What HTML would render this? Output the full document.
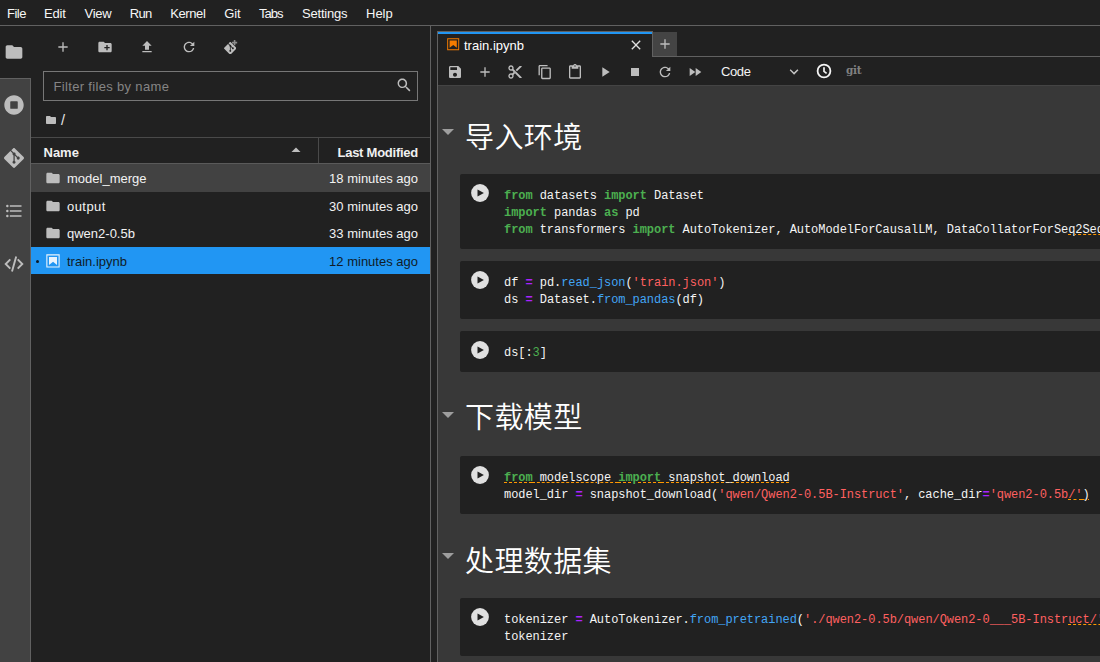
<!DOCTYPE html>
<html lang="zh">
<head>
<meta charset="utf-8">
<title>JupyterLab</title>
<style>
html,body{margin:0;padding:0;}
body{width:1100px;height:662px;overflow:hidden;background:#212121;position:relative;
 font-family:"Liberation Sans","Noto Sans CJK SC",sans-serif;font-size:13px;color:#f2f2f2;}
.a{position:absolute;}
.t{position:absolute;white-space:nowrap;line-height:16px;height:16px;}
svg{position:absolute;display:block;}
.ic{fill:#bdbdbd;}
/* menu */
#menubar{left:0;top:0;width:1100px;height:25px;background:#212121;border-bottom:1px solid #616161;}
#menubar .t{top:5.500px;color:#f6f6f6;}
/* sidebar */
#sidebar{left:0;top:26px;width:30px;height:636px;background:#424242;border-right:1px solid #616161;}
#sbactive{left:0;top:26px;width:31px;height:52px;background:#212121;}
#sbtopline{left:0;top:78px;width:31px;height:1px;background:#616161;}
/* file browser */
#fb{left:31px;top:26px;width:399px;height:636px;background:#212121;}
#fbright{left:430px;top:26px;width:1px;height:636px;background:#616161;}
#filter{left:43px;top:71px;width:372.500px;height:27.500px;border:1px solid #777;box-sizing:content-box;}
.hline{position:absolute;height:1px;background:#4a4a4a;}
.row{position:absolute;left:31px;width:399px;}
.mono{font-family:"Liberation Mono","DejaVu Sans Mono",monospace;font-size:12px;letter-spacing:-0.06px;}
/* main */
#tab{left:437px;top:31px;width:216px;height:26px;background:#212121;border-left:1px solid #616161;border-right:1px solid #616161;border-top:1px solid #616161;box-sizing:border-box;}
#tabblue{left:438px;top:32px;width:214px;height:2px;background:#2196f3;}
#tabline{left:652px;top:56px;width:448px;height:1px;background:#616161;}
#plusbtn{left:653px;top:32px;width:24px;height:24px;background:#444;}
#mainleft{left:437px;top:57px;width:1px;height:605px;background:#616161;}
#toolbar{left:438px;top:57px;width:662px;height:28px;background:#212121;border-bottom:1px solid #444;}
#nb{left:438px;top:86px;width:662px;height:576px;background:#383838;}
.cell{position:absolute;left:460px;width:640px;background:#212121;border-radius:2px 0 0 2px;}
.h1{position:absolute;left:465px;white-space:nowrap;font-size:29px;letter-spacing:0.4px;line-height:40px;height:40px;color:#fff;font-weight:300;
 font-family:"Liberation Sans","Noto Sans CJK SC DemiLight","Noto Sans CJK SC",sans-serif;}
.code{position:absolute;left:504px;margin-top:1px;white-space:pre;line-height:17px;color:#f4f4f4;}
.k{color:#4caf50;font-weight:bold;}
.o{color:#aa22ff;font-weight:bold;}
.p{color:#42a5f5;}
.s{color:#ff6060;}
.n{color:#4caf50;}
.u{text-decoration:underline dashed #ff9800 1px;text-underline-offset:1px;}
</style>
</head>
<body>

<!-- ===== menu bar ===== -->
<div id="menubar" class="a">
 <span class="t" style="left:7px;letter-spacing:-0.500px">File</span>
 <span class="t" style="left:44px;letter-spacing:-0.200px">Edit</span>
 <span class="t" style="left:84.4px;letter-spacing:-0.2px">View</span>
 <span class="t" style="left:129.700px;letter-spacing:-0.700px">Run</span>
 <span class="t" style="left:170.2px;letter-spacing:-0.4px">Kernel</span>
 <span class="t" style="left:224.200px;letter-spacing:-0.050px">Git</span>
 <span class="t" style="left:258.900px;letter-spacing:-0.950px">Tabs</span>
 <span class="t" style="left:302px;letter-spacing:-0.2px">Settings</span>
 <span class="t" style="left:366px">Help</span>
</div>

<!-- ===== left sidebar ===== -->
<div id="sidebar" class="a"></div>
<div id="sbactive" class="a"></div>
<div id="sbtopline" class="a"></div>

<!-- ===== file browser ===== -->
<div id="fb" class="a"></div>
<div id="fbright" class="a"></div>
<div id="filter" class="a"></div>
<span class="t" style="left:53.5px;top:78.700px;color:#858585;letter-spacing:0.33px">Filter files by name</span>
<span class="t" style="left:61px;top:112.200px;color:#e8e8e8;font-size:14.500px">/</span>
<div class="hline" style="left:31px;top:137px;width:399px;"></div>
<div class="hline" style="left:31px;top:163px;width:399px;background:#5a5a5a"></div>
<div class="a" style="left:318px;top:138px;width:1px;height:25px;background:#4a4a4a;"></div>
<span class="t" style="left:43.5px;top:144.5px;font-weight:bold;color:#f0f0f0;">Name</span>
<span class="t" style="right:682px;top:144.500px;font-weight:bold;color:#f0f0f0;letter-spacing:-0.250px">Last Modified</span>

<div class="row" style="top:164px;height:27.600px;background:#424242;"></div>
<div class="row" style="top:246.700px;height:27.300px;background:#2196f3;"></div>
<span class="t" style="left:67px;top:170.5px;">model_merge</span>
<span class="t" style="left:67px;top:198.5px;letter-spacing:0.45px">output</span>
<span class="t" style="left:67px;top:225.5px;">qwen2-0.5b</span>
<span class="t" style="left:67px;top:253.500px;color:#101c28;">train.ipynb</span>
<span class="t" style="right:682px;top:170.5px;">18 minutes ago</span>
<span class="t" style="right:682px;top:198.5px;">30 minutes ago</span>
<span class="t" style="right:682px;top:225.5px;">33 minutes ago</span>
<span class="t" style="right:682px;top:253.500px;color:#101c28;">12 minutes ago</span>
<div class="a" style="left:35.500px;top:259.700px;width:3.400px;height:3.400px;border-radius:2px;background:#0d1b2a;"></div>

<!-- ===== main area ===== -->
<div id="tab" class="a"></div>
<div id="tabblue" class="a"></div>
<div id="tabline" class="a"></div>
<div id="plusbtn" class="a"></div>
<div id="toolbar" class="a"></div>
<div id="mainleft" class="a"></div>
<span class="t" style="left:464px;top:37.700px;color:#fff;">train.ipynb</span>
<span class="t" style="left:721px;top:63.500px;color:#f4f4f4;letter-spacing:-0.400px">Code</span>
<span class="t" style="left:846px;top:61.500px;color:#808080;font-family:'DejaVu Serif',serif;font-weight:bold;font-size:10.500px;letter-spacing:-0.300px">git</span>

<div id="nb" class="a"></div>

<!-- headings -->
<div class="h1" style="top:117.500px;">导入环境</div>
<div class="h1" style="top:398.200px;">下载模型</div>
<div class="h1" style="top:542px;">处理数据集</div>

<!-- cells -->
<div class="cell" style="top:174px;height:74.5px;"></div>
<div class="cell" style="top:261px;height:58px;"></div>
<div class="cell" style="top:331px;height:40.5px;"></div>
<div class="cell" style="top:456px;height:57.700px;"></div>
<div class="cell" style="top:598px;height:57.5px;"></div>

<div class="code mono" style="top:186.5px;"><span class="k">from</span> datasets <span class="k">import</span> Dataset
<span class="k">import</span> pandas <span class="k">as</span> pd
<span class="k">from</span> transformers <span class="k">import</span> AutoTokenizer, AutoModelForCausalLM, DataCollatorForSe<span class="u">q2Seq, TrainingArguments, Trainer</span></div>

<div class="code mono" style="top:273.5px;">df <span class="o">=</span> pd.<span class="p">read_json</span>(<span class="s">'train.json'</span>)
ds <span class="o">=</span> Dataset.<span class="p">from_pandas</span>(df)</div>

<div class="code mono" style="top:343.5px;">ds[:<span class="n">3</span>]</div>

<div class="code mono" style="top:469px;"><span class="u"><span class="k">from</span> modelscope <span class="k">import</span> snapshot_download</span>
model_dir <span class="o">=</span> snapshot_download(<span class="s">'qwen/Qwen2-0.5B-Instruct'</span>, cache_dir<span class="o">=</span><span class="s">'qwen2-0.5b<span class="u">/'</span></span><span class="u">)</span></div>

<div class="code mono" style="top:610.5px;">tokenizer <span class="o">=</span> AutoTokenizer.<span class="p">from_pretrained</span>(<span class="s">'./qwen2-0.5b/qwen/Qwen2-0___5B-Instr<span class="u">uct/', use_fast=False</span></span>)
tokenizer</div>

<!-- ===== icons ===== -->
<!-- sidebar -->
<svg class="ic" style="left:4px;top:42px" width="20" height="20" viewBox="0 0 24 24"><path d="M10 4H4c-1.1 0-1.99.9-1.99 2L2 18c0 1.1.9 2 2 2h16c1.1 0 2-.9 2-2V8c0-1.100-.9-2-2-2h-8l-2-2z"/></svg>
<svg class="ic" style="left:4px;top:95px" width="20" height="20" viewBox="0 0 512 512"><path d="M256 8C119 8 8 119 8 256s111 248 248 248 248-111 248-248S393 8 256 8zm96 328c0 8.800-7.200 16-16 16H176c-8.800 0-16-7.200-16-16V176c0-8.800 7.200-16 16-16h160c8.800 0 16 7.200 16 16v160z"/></svg>
<svg class="ic" style="left:4px;top:148px" width="20" height="20" viewBox="0 0 24 24"><path d="M23.546 10.930L13.067.452c-.604-.603-1.582-.603-2.188 0L8.708 2.627l2.760 2.760c.645-.215 1.379-.070 1.889.441.516.515.658 1.258.438 1.900l2.658 2.660c.645-.223 1.387-.078 1.900.435.721.720.721 1.884 0 2.604-.719.719-1.881.719-2.600 0-.539-.541-.674-1.337-.404-1.996L12.860 8.955v6.525c.176.086.342.203.488.348.713.721.713 1.883 0 2.600-.719.721-1.889.721-2.609 0-.719-.719-.719-1.879 0-2.598.182-.180.387-.316.605-.406V8.835c-.217-.091-.424-.222-.600-.401-.545-.545-.676-1.342-.396-2.009L7.636 3.700.450 10.881c-.6.605-.6 1.584 0 2.189l10.480 10.477c.604.604 1.582.604 2.186 0l10.430-10.430c.605-.603.605-1.582 0-2.187"/></svg>
<svg class="ic" style="left:4px;top:201px" width="20" height="20" viewBox="0 0 24 24"><path d="M7,5H21V7H7V5M7,13V11H21V13H7M4,4.500A1.500,1.500 0 0,1 5.500,6A1.500,1.500 0 0,1 4,7.500A1.500,1.500 0 0,1 2.500,6A1.500,1.500 0 0,1 4,4.500M4,10.500A1.500,1.500 0 0,1 5.500,12A1.500,1.500 0 0,1 4,13.500A1.500,1.500 0 0,1 2.500,12A1.500,1.500 0 0,1 4,10.500M7,19V17H21V19H7M4,16.500A1.500,1.500 0 0,1 5.500,18A1.500,1.500 0 0,1 4,19.500A1.500,1.500 0 0,1 2.500,18A1.500,1.500 0 0,1 4,16.500Z"/></svg>
<svg style="left:4px;top:254.300px;fill:none;stroke:#bdbdbd;stroke-width:1.900" width="20" height="20" viewBox="0 0 20 20"><path d="M6.300 5.300L1.700 10l4.600 4.700M13.700 5.300L18.300 10l-4.600 4.700M12.200 2.400L8 17.600"/></svg>

<!-- file browser toolbar -->
<svg class="ic" style="left:55px;top:39px" width="16" height="16" viewBox="0 0 24 24"><path d="M19 13h-6v6h-2v-6H5v-2h6V5h2v6h6v2z"/></svg>
<svg class="ic" style="left:97px;top:39px" width="16" height="16" viewBox="0 0 24 24"><path d="M20 6h-8l-2-2H4c-1.110 0-1.990.890-1.990 2L2 18c0 1.110.890 2 2 2h16c1.110 0 2-.890 2-2V8c0-1.110-.890-2-2-2zm-1 8h-3v3h-2v-3h-3v-2h3V9h2v3h3v2z"/></svg>
<svg class="ic" style="left:139px;top:39px" width="16" height="16" viewBox="0 0 24 24"><path d="M9 16h6v-6h4l-7-7-7 7h4zm-4 2h14v2H5z"/></svg>
<svg class="ic" style="left:181px;top:39px" width="16" height="16" viewBox="0 0 18 18"><path d="M9 13.500c-2.490 0-4.500-2.010-4.500-4.500S6.510 4.500 9 4.500c1.240 0 2.360.520 3.170 1.330L10 8h5V3l-1.760 1.760C12.150 3.680 10.660 3 9 3 5.690 3 3.010 5.690 3.010 9S5.690 15 9 15c2.970 0 5.430-2.160 5.900-5h-1.520c-.46 2-2.240 3.500-4.380 3.500z"/></svg>
<svg class="ic" style="left:223.550px;top:41.850px" width="12.500" height="12.500" viewBox="0 0 24 24"><path d="M23.546 10.930L13.067.452c-.604-.603-1.582-.603-2.188 0L8.708 2.627l2.760 2.760c.645-.215 1.379-.070 1.889.441.516.515.658 1.258.438 1.900l2.658 2.660c.645-.223 1.387-.078 1.900.435.721.720.721 1.884 0 2.604-.719.719-1.881.719-2.600 0-.539-.541-.674-1.337-.404-1.996L12.860 8.955v6.525c.176.086.342.203.488.348.713.721.713 1.883 0 2.600-.719.721-1.889.721-2.609 0-.719-.719-.719-1.879 0-2.598.182-.180.387-.316.605-.406V8.835c-.217-.091-.424-.222-.600-.401-.545-.545-.676-1.342-.396-2.009L7.636 3.700.450 10.881c-.6.605-.6 1.584 0 2.189l10.480 10.477c.604.604 1.582.604 2.186 0l10.430-10.430c.605-.603.605-1.582 0-2.187"/></svg>
<svg style="left:232.400px;top:40.400px;fill:#8c8c8c" width="5.200" height="5.200" viewBox="0 0 5.200 5.200"><path d="M1.800 0h1.600v1.800h1.800v1.600H3.400v1.800H1.800V3.400H0V1.800h1.800z"/></svg>

<!-- search -->
<svg class="ic" style="left:396.200px;top:77px" width="16" height="16" viewBox="0 0 18 18"><path d="M12.100 10.900h-.7l-.2-.2c.8-.9 1.300-2.200 1.300-3.500 0-3-2.400-5.400-5.400-5.400S1.800 4.200 1.800 7.100s2.400 5.400 5.400 5.400c1.300 0 2.500-.5 3.500-1.300l.2.200v.7l4.100 4.100 1.200-1.200-4.100-4.100zm-5 0c-2.100 0-3.700-1.700-3.700-3.700s1.700-3.700 3.700-3.700 3.700 1.700 3.700 3.700-1.600 3.700-3.700 3.700z"/></svg>
<!-- breadcrumb folder -->
<svg class="ic" style="left:45px;top:114px" width="12" height="12" viewBox="0 0 24 24"><path d="M10 4H4c-1.100 0-1.990.9-1.990 2L2 18c0 1.100.9 2 2 2h16c1.100 0 2-.9 2-2V8c0-1.100-.9-2-2-2h-8l-2-2z"/></svg>
<!-- sort caret -->
<svg class="ic" style="left:290px;top:146px" width="12" height="7" viewBox="0 0 12 7"><path d="M1.500 6L6 1.500l4.500 4.500z"/></svg>
<!-- row icons -->
<svg class="ic" style="left:45px;top:170px" width="16" height="16" viewBox="0 0 24 24"><path d="M10 4H4c-1.100 0-1.990.9-1.990 2L2 18c0 1.100.9 2 2 2h16c1.100 0 2-.9 2-2V8c0-1.100-.9-2-2-2h-8l-2-2z"/></svg>
<svg class="ic" style="left:45px;top:198px" width="16" height="16" viewBox="0 0 24 24"><path d="M10 4H4c-1.100 0-1.990.9-1.990 2L2 18c0 1.100.9 2 2 2h16c1.100 0 2-.9 2-2V8c0-1.100-.9-2-2-2h-8l-2-2z"/></svg>
<svg class="ic" style="left:45px;top:225px" width="16" height="16" viewBox="0 0 24 24"><path d="M10 4H4c-1.100 0-1.990.9-1.990 2L2 18c0 1.100.9 2 2 2h16c1.100 0 2-.9 2-2V8c0-1.100-.9-2-2-2h-8l-2-2z"/></svg>
<svg style="left:45px;top:253px;fill:#e8f3fd" width="16" height="16" viewBox="0 0 22 22"><path d="M18.700 3.300v15.400H3.300V3.300h15.400m1.500-1.500H1.800v18.300h18.300l.1-18.300z"/><path d="M16.500 16.500l-5.400-4.300-5.600 4.300v-11h11z"/></svg>

<!-- tab icons -->
<svg style="left:445.800px;top:36.800px;fill:#f57c00" width="14.400" height="14.400" viewBox="0 0 22 22"><path d="M18.700 3.300v15.400H3.300V3.300h15.400m1.500-1.500H1.800v18.300h18.300l.1-18.300z"/><path d="M16.500 16.500l-5.400-4.300-5.600 4.300v-11h11z"/></svg>
<svg style="left:628px;top:37px;fill:#e0e0e0" width="16" height="16" viewBox="0 0 24 24"><path d="M19 6.410L17.590 5 12 10.590 6.410 5 5 6.410 10.590 12 5 17.590 6.410 19 12 13.410 17.590 19 19 17.590 13.410 12z"/></svg>
<svg class="ic" style="left:657px;top:36px" width="16" height="16" viewBox="0 0 24 24"><path d="M19 13h-6v6h-2v-6H5v-2h6V5h2v6h6v2z"/></svg>

<!-- notebook toolbar -->
<svg class="ic" style="left:447px;top:64px" width="16" height="16" viewBox="0 0 24 24"><path d="M17 3H5c-1.110 0-2 .9-2 2v14c0 1.100.890 2 2 2h14c1.100 0 2-.9 2-2V7l-4-4zm-5 16c-1.660 0-3-1.340-3-3s1.340-3 3-3 3 1.340 3 3-1.340 3-3 3zm3-10H5V5h10v4z"/></svg>
<svg class="ic" style="left:477px;top:64px" width="16" height="16" viewBox="0 0 24 24"><path d="M19 13h-6v6h-2v-6H5v-2h6V5h2v6h6v2z"/></svg>
<svg class="ic" style="left:507px;top:64px" width="16" height="16" viewBox="0 0 24 24"><path d="M9.640 7.640c.23-.5.360-1.050.360-1.640 0-2.210-1.790-4-4-4S2 3.790 2 6s1.790 4 4 4c.590 0 1.140-.130 1.640-.360L10 12l-2.360 2.360C7.140 14.130 6.590 14 6 14c-2.210 0-4 1.790-4 4s1.790 4 4 4 4-1.790 4-4c0-.590-.130-1.140-.360-1.640L12 14l7 7h3v-1L9.640 7.640zM6 8c-1.100 0-2-.890-2-2s.9-2 2-2 2 .890 2 2-.9 2-2 2zm0 12c-1.100 0-2-.890-2-2s.9-2 2-2 2 .890 2 2-.9 2-2 2zm6-7.500c-.280 0-.5-.220-.5-.5s.220-.5.500-.5.500.220.500.5-.220.500-.5.500zM19 3l-6 6 2 2 7-7V3z"/></svg>
<svg class="ic" style="left:537px;top:64px" width="16" height="16" viewBox="0 0 18 18"><path d="M11.900 1H3.200c-.8 0-1.500.7-1.500 1.500v10.200h1.500V2.500h8.700V1zm2.200 2.900h-8c-.8 0-1.500.7-1.500 1.500v10.200c0 .8.700 1.500 1.500 1.500h8c.8 0 1.500-.7 1.500-1.500V5.400c0-.8-.7-1.500-1.500-1.500zm0 11.600h-8V5.400h8v10.100z"/></svg>
<svg class="ic" style="left:567px;top:64px" width="16" height="16" viewBox="0 0 24 24"><path d="M19 2h-4.180C14.400.840 13.300 0 12 0c-1.300 0-2.400.840-2.820 2H5c-1.100 0-2 .9-2 2v16c0 1.100.9 2 2 2h14c1.100 0 2-.9 2-2V4c0-1.100-.9-2-2-2zm-7 0c.550 0 1 .450 1 1s-.450 1-1 1-1-.450-1-1 .450-1 1-1zm7 18H5V4h2v3h10V4h2v16z"/></svg>
<svg class="ic" style="left:597px;top:64px" width="16" height="16" viewBox="0 0 24 24"><path d="M8 5v14l11-7z"/></svg>
<svg class="ic" style="left:627px;top:64px" width="16" height="16" viewBox="0 0 24 24"><path d="M6 6h12v12H6z"/></svg>
<svg class="ic" style="left:657px;top:64px" width="16" height="16" viewBox="0 0 18 18"><path d="M9 13.500c-2.490 0-4.500-2.010-4.500-4.500S6.510 4.500 9 4.500c1.240 0 2.360.520 3.170 1.330L10 8h5V3l-1.760 1.760C12.150 3.680 10.660 3 9 3 5.690 3 3.010 5.690 3.010 9S5.690 15 9 15c2.970 0 5.430-2.160 5.900-5h-1.520c-.46 2-2.240 3.500-4.380 3.500z"/></svg>
<svg class="ic" style="left:687px;top:64px" width="16" height="16" viewBox="0 0 24 24"><path d="M4 18l8.500-6L4 6v12zm9-12v12l8.500-6L13 6z"/></svg>
<svg class="ic" style="left:786px;top:64px;fill:#c4c4c4" width="16" height="16" viewBox="0 0 18 18"><path d="M5.200 5.900L9 9.700l3.800-3.800 1.200 1.200-4.900 5-4.900-5z"/></svg>
<svg style="left:815.800px;top:62.800px;fill:none;stroke:#f4f4f4;stroke-width:1.800" width="16" height="16" viewBox="0 0 16 16"><circle cx="8" cy="8" r="6.400"/><path d="M8 4.200v4.100l2.600 2" stroke-width="1.700"/></svg>

<!-- heading carets -->
<svg style="left:442px;top:129px;fill:#9e9e9e" width="12" height="6" viewBox="0 0 12 6"><path d="M0 0h12L6 6z"/></svg>
<svg style="left:442px;top:411.500px;fill:#9e9e9e" width="12" height="6" viewBox="0 0 12 6"><path d="M0 0h12L6 6z"/></svg>
<svg style="left:442px;top:553px;fill:#9e9e9e" width="12" height="6" viewBox="0 0 12 6"><path d="M0 0h12L6 6z"/></svg>

<!-- cell run buttons -->
<svg style="left:471px;top:183.800px" width="18" height="18" viewBox="0 0 18 18"><circle cx="9" cy="9" r="8.900" fill="#e0e0e0"/><path d="M6.500 5.600v6.800L12.900 9z" fill="#212121"/></svg>
<svg style="left:471px;top:271px" width="18" height="18" viewBox="0 0 18 18"><circle cx="9" cy="9" r="8.900" fill="#e0e0e0"/><path d="M6.500 5.600v6.800L12.900 9z" fill="#212121"/></svg>
<svg style="left:471px;top:341px" width="18" height="18" viewBox="0 0 18 18"><circle cx="9" cy="9" r="8.900" fill="#e0e0e0"/><path d="M6.500 5.600v6.800L12.900 9z" fill="#212121"/></svg>
<svg style="left:471px;top:465.800px" width="18" height="18" viewBox="0 0 18 18"><circle cx="9" cy="9" r="8.900" fill="#e0e0e0"/><path d="M6.500 5.600v6.800L12.900 9z" fill="#212121"/></svg>
<svg style="left:471px;top:607.900px" width="18" height="18" viewBox="0 0 18 18"><circle cx="9" cy="9" r="8.900" fill="#e0e0e0"/><path d="M6.500 5.600v6.800L12.900 9z" fill="#212121"/></svg>

</body>
</html>
